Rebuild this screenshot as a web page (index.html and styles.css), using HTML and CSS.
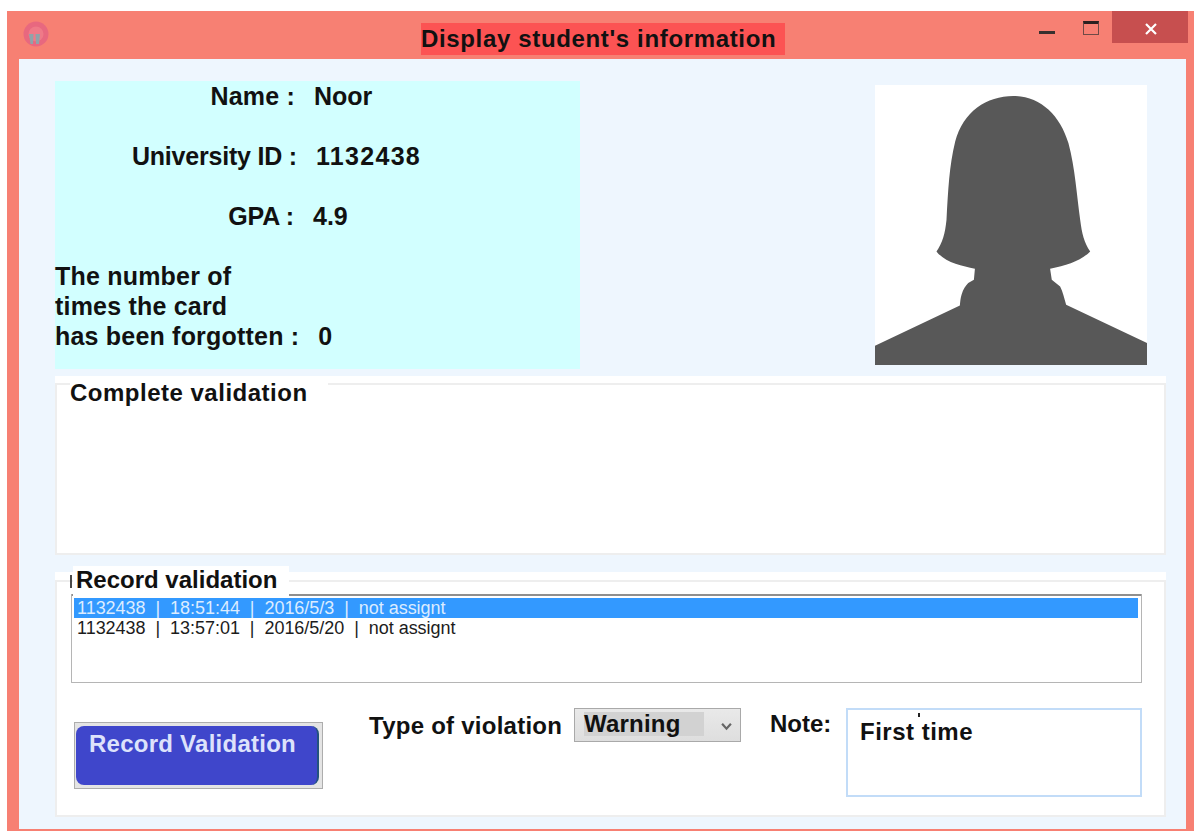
FILE: index.html
```html
<!DOCTYPE html>
<html lang="en">
<head>
<meta charset="utf-8">
<title>Display student's information</title>
<link rel="stylesheet" href="styles.css">
</head>
<body>
<div class="window">
  <header class="titlebar">
    <svg class="app-icon" viewBox="0 0 26 26" aria-hidden="true">
      <circle cx="13" cy="13" r="12.5" fill="#e8687f"/>
      <circle cx="13" cy="13" r="7.5" fill="#ef7a88"/>
      <path d="M6 13h4.500l-.5 10H7.500zM12.500 13H17l-1 10h-3z" fill="#8fa3aa"/>
    </svg>
    <h1 class="title">Display student's information</h1>
    <div class="controls">
      <span class="ctl-min"></span>
      <span class="ctl-max"></span>
      <span class="ctl-close">
        <svg viewBox="0 0 14 14" aria-hidden="true"><path d="M2 2l10 10M12 2L2 12" stroke="#fff" stroke-width="2.2"/></svg>
      </span>
    </div>
  </header>

  <main class="client">
    <section class="top-row">
      <div class="info">
        <div class="info-row">
          <span class="info-label l-name">Name :</span><span class="info-value">Noor</span>
        </div>
        <div class="info-row">
          <span class="info-label l-id">University ID :</span><span class="info-value v-id">1132438</span>
        </div>
        <div class="info-row">
          <span class="info-label l-gpa">GPA :</span><span class="info-value">4.9</span>
        </div>
        <div class="info-multi">The number of<br>times the card<br>has been forgotten :<span class="info-value">0</span></div>
      </div>
      <svg class="photo" viewBox="226 255 814 841" preserveAspectRatio="none" role="img" aria-label="Student photo">
        <rect x="226" y="255" width="814" height="841" fill="#fff"/>
        <path fill="#585858" d="M226 1096V1038L480 917C481 905 482 895 485 885C490 868 497 858 505 850L522 840L525 807C485 798 435 788 410 755C428 730 436 700 440 660C445 570 448 500 466 425C490 335 560 288 640 288C720 288 780 345 805 430C825 505 830 590 840 660C845 700 852 730 870 755C840 785 800 796 750 807L755 840L780 860C788 875 792 895 798 915L1040 1030V1096Z"/>
      </svg>
    </section>

    <section class="group group-complete">
      <div class="frame"></div>
      <h2 class="legend legend-complete">Complete validation</h2>
    </section>

    <section class="group group-record">
      <div class="frame frame-record">
        <ul class="records">
          <li class="record selected">1132438 &nbsp;|&nbsp; 18:51:44 &nbsp;|&nbsp; 2016/5/3 &nbsp;|&nbsp; not assignt</li>
          <li class="record">1132438 &nbsp;|&nbsp; 13:57:01 &nbsp;|&nbsp; 2016/5/20 &nbsp;|&nbsp; not assignt</li>
        </ul>
        <div class="form-row">
          <div class="btn-shell"><button class="btn" type="button">Record Validation</button></div>
          <span class="field-label label-type">Type of violation</span>
          <div class="select">
            <span class="select-text">Warning</span>
            <svg class="chevron" viewBox="0 0 10 8" aria-hidden="true"><path d="M1 1.5l4 4.5 4-4.5" fill="none" stroke="#666" stroke-width="2"/></svg>
          </div>
          <span class="field-label label-note">Note:</span>
          <div class="note">First time</div>
        </div>
      </div>
      <h2 class="legend legend-record">Record validation</h2>
    </section>
  </main>
</div>
</body>
</html>
```

FILE: styles.css
```css
* { box-sizing: border-box; }

html, body { margin: 0; height: 100%; }

body {
  background: #fff;
  padding: 11px 0 0 7px;
  overflow: hidden;
  font-family: "Liberation Sans", Arial, sans-serif;
  color: #111;
}

.window {
  width: 1187px;
  height: 820px;
  background: #f78073;
  display: flex;
  flex-direction: column;
}

/* Title bar */
.titlebar {
  height: 48px;
  flex: none;
  display: flex;
  align-items: flex-start;
}

.app-icon { width: 26px; height: 26px; margin: 10px 0 0 16px; flex: none; }

.title {
  margin: 12px 0 0 372px;
  height: 32px;
  width: 364px;
  background: #fc5353;
  font-size: 24px;
  line-height: 31px;
  font-weight: 700;
  letter-spacing: 0.65px;
  white-space: nowrap;
  overflow: hidden;
}

.controls {
  margin-left: auto;
  display: flex;
  align-items: flex-start;
  height: 32px;
  margin-right: 6px;
}

.ctl-min { width: 16px; height: 3px; background: #38302f; margin-top: 20px; }

.ctl-max {
  width: 16px;
  height: 14px;
  margin: 10px 13px 0 28px;
  border: 1px solid #6f4a46;
  border-top: 3px solid #2a2020;
}

.ctl-close {
  width: 76px;
  height: 32px;
  padding: 3px 0 0 1px;
  background: #c74f4f;
  display: flex;
  align-items: center;
  justify-content: center;
}

.ctl-close svg { width: 14px; height: 14px; }

/* Client area */
.client {
  flex: 1;
  margin: 0 8px 2px 12px;
  padding: 22px 20px 0 36px;
  background: #eef6fe;
}

.top-row { display: flex; justify-content: space-between; align-items: flex-start; height: 288px; }

.info {
  width: 525px;
  height: 288px;
  background: #d2ffff;
  font-size: 25px;
  line-height: 30px;
  font-weight: 700;
}

.info-row { display: flex; margin-bottom: 30px; }
.info-label { text-align: right; white-space: nowrap; }
.l-name { width: 240px; letter-spacing: 0.2px; }
.l-id { width: 242px; letter-spacing: -0.2px; }
.l-gpa { width: 239px; letter-spacing: -0.2px; }
.info-value { white-space: nowrap; margin-left: 19px; }
.v-id { letter-spacing: 1.3px; }
.info-multi { letter-spacing: 0.2px; }

.photo { width: 272px; height: 280px; margin: 4px 19px 0 0; display: block; flex: none; }

/* Group boxes */
.group { position: relative; background: #fff; width: 1111px; }
.group-complete { margin-top: 7px; height: 179px; padding-top: 7px; }
.group-record { margin-top: 17px; height: 245px; padding-top: 8px; }

.frame {
  height: 100%;
  border: 2px solid #eeeeee;
}

.frame-record { padding: 12px 0 0 14px; }

.legend {
  position: absolute;
  margin: 0;
  background: #fff;
  font-size: 24px;
  line-height: 30px;
  font-weight: 700;
  white-space: nowrap;
}

.legend-complete { left: 15px; top: 2px; width: 258px; letter-spacing: 0.5px; }
.legend-record { left: 18px; top: -6px; width: 216px; height: 30px; padding-left: 3px; line-height: 28px; }

/* Stray mark at the left edge of the legend */
.legend-record::before {
  content: "";
  position: absolute;
  left: -3px;
  top: 9px;
  width: 2px;
  height: 13px;
  background: #4a4a4a;
}

/* Record list */
.records {
  list-style: none;
  margin: 0;
  padding: 2px 3px 0 2px;
  width: 1071px;
  height: 89px;
  border: 1px solid #b5b5b5;
  border-top: 2px solid #8f8f8f;
  border-radius: 1px;
  background: #fff;
}

.record {
  height: 20px;
  padding-left: 3px;
  font-size: 18px;
  line-height: 20px;
  letter-spacing: -0.03px;
  white-space: nowrap;
  color: #1c1c1c;
}

.record.selected { background: #3399ff; color: #dcecff; }

/* Form row */
.form-row { display: flex; align-items: flex-start; margin-top: 25px; }

.btn-shell {
  width: 249px;
  height: 67px;
  margin: 14px 0 0 3px;
  padding: 3px 3px 3px 1px;
  background: #e4e4e4;
  border: 1px solid #adadad;
  flex: none;
}

.btn {
  display: flex;
  align-items: flex-start;
  width: 100%;
  height: 100%;
  padding: 3px 0 0 13px;
  border: 0;
  border-right: 2px solid #23527f;
  border-radius: 8px;
  background: #3f46cb;
  color: #dde2fb;
  font: 700 24px/30px "Liberation Sans", Arial, sans-serif;
  letter-spacing: 0.25px;
  text-align: left;
}

.field-label { font-size: 24px; line-height: 30px; font-weight: 700; white-space: nowrap; flex: none; }
.label-type { margin: 3px 0 0 46px; width: 193px; letter-spacing: 0.25px; }
.label-note { margin: 1px 0 0 29px; width: 61px; }

.select {
  width: 167px;
  height: 34px;
  margin-left: 12px;
  padding: 3px 0 0 9px;
  border: 1px solid #a9a9a9;
  background: linear-gradient(#e9e9e9, #dedede);
  position: relative;
  flex: none;
}

.select-text {
  display: block;
  width: 120px;
  height: 24px;
  background: #d2d2d2;
  font-size: 24px;
  line-height: 24px;
  font-weight: 700;
  letter-spacing: 0.2px;
}

.chevron { position: absolute; right: 8px; top: 13px; width: 11px; height: 9px; }

.note {
  position: relative;
  width: 296px;
  height: 89px;
  margin-left: 15px;
  padding: 7px 0 0 12px;
  border: 2px solid #c2dcf8;
  font-size: 24px;
  line-height: 30px;
  font-weight: 700;
  letter-spacing: 0.5px;
  flex: none;
}

/* Small tick over the note text */
.note::before {
  content: "";
  position: absolute;
  left: 70px;
  top: 3px;
  width: 2px;
  height: 4px;
  background: #222;
}
```
